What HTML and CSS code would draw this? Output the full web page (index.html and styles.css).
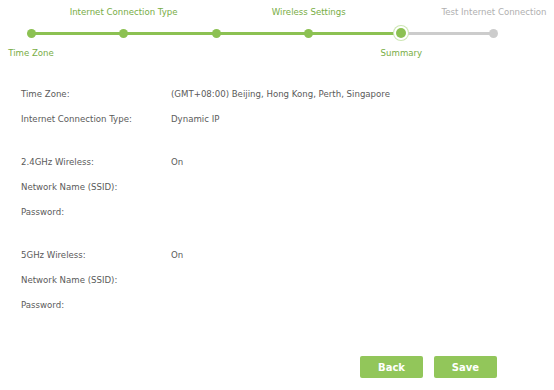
FILE: index.html
```html
<!DOCTYPE html>
<html>
<head>
<meta charset="utf-8">
<link rel="stylesheet" href="styles.css">
</head>
<body>
<div class="page">
  <div class="stepper">
    <div class="step done"><span class="top"></span><span class="dot"></span><span class="bottom">Time Zone</span></div>
    <div class="step done"><span class="top">Internet Connection Type</span><span class="dot"></span><span class="bottom"></span></div>
    <div class="step done"><span class="top"></span><span class="dot"></span><span class="bottom"></span></div>
    <div class="step done"><span class="top">Wireless Settings</span><span class="dot"></span><span class="bottom"></span></div>
    <div class="step done active"><span class="top"></span><span class="dot"></span><span class="bottom">Summary</span></div>
    <div class="step todo"><span class="top">Test Internet Connection</span><span class="dot"></span><span class="bottom"></span></div>
  </div>

  <div class="summary">
    <div class="group">
      <div class="row"><span class="label">Time Zone:</span><span class="value">(GMT+08:00) Beijing, Hong Kong, Perth, Singapore</span></div>
      <div class="row"><span class="label">Internet Connection Type:</span><span class="value">Dynamic IP</span></div>
    </div>
    <div class="group">
      <div class="row"><span class="label">2.4GHz Wireless:</span><span class="value">On</span></div>
      <div class="row"><span class="label">Network Name (SSID):</span><span class="value"></span></div>
      <div class="row"><span class="label">Password:</span><span class="value"></span></div>
    </div>
    <div class="group">
      <div class="row"><span class="label">5GHz Wireless:</span><span class="value">On</span></div>
      <div class="row"><span class="label">Network Name (SSID):</span><span class="value"></span></div>
      <div class="row"><span class="label">Password:</span><span class="value"></span></div>
    </div>
  </div>

  <div class="actions">
    <button class="btn">Back</button>
    <button class="btn">Save</button>
  </div>
</div>
</body>
</html>
```

FILE: styles.css
```css
html, body {
  margin: 0;
  padding: 0;
  background: #ffffff;
}
body {
  font-family: "DejaVu Sans", Verdana, sans-serif;
  font-size: 8.6px;
  color: #5a5a5a;
  width: 554px;
  height: 390px;
  overflow: hidden;
}
.page {
  display: flex;
  flex-direction: column;
}
.stepper {
  display: flex;
  margin-left: -15.3px;
  padding-top: 2px;
}
.step {
  width: 92.6px;
  flex: none;
  display: flex;
  flex-direction: column;
  align-items: center;
  position: relative;
}
.step .top, .step .bottom {
  white-space: nowrap;
  color: #78ad45;
  height: 20px;
  line-height: 20px;
}
.step .bottom {
  height: 18px;
  line-height: 18px;
}
.step.todo .top {
  color: #b0b0b0;
}
.step::before {
  content: "";
  position: absolute;
  left: -46.3px;
  width: 92.6px;
  top: 29.5px;
  height: 3px;
  background: #8cc152;
}
.step:first-child::before {
  display: none;
}
.step.todo::before {
  background: #cccccc;
}
.dot {
  width: 9px;
  height: 9px;
  margin: 6.5px 0;
  border-radius: 50%;
  background: #8cc152;
  position: relative;
  z-index: 1;
}
.step.todo .dot {
  background: #cccccc;
}
.step.active .dot {
  width: 10px;
  height: 10px;
  margin: 6px 0;
  background: #8cc152;
  box-shadow: 0 0 0 2px #ffffff, 0 0 0 3px #cde6b3;
}
.summary {
  padding-left: 21px;
  padding-top: 19px;
  display: flex;
  flex-direction: column;
  gap: 18px;
}
.row {
  display: flex;
  height: 25px;
  align-items: center;
}
.label {
  width: 150px;
  flex: none;
}
.value {
  color: #5a5a5a;
}
.actions {
  display: flex;
  justify-content: flex-end;
  gap: 11px;
  padding-right: 57px;
  padding-top: 39px;
}
.btn {
  width: 63px;
  height: 22px;
  border: none;
  border-radius: 2px;
  background: #92c65a;
  color: #ffffff;
  font-family: "DejaVu Sans", Verdana, sans-serif;
  font-size: 10px;
  font-weight: 600;
  padding: 0;
}
```
